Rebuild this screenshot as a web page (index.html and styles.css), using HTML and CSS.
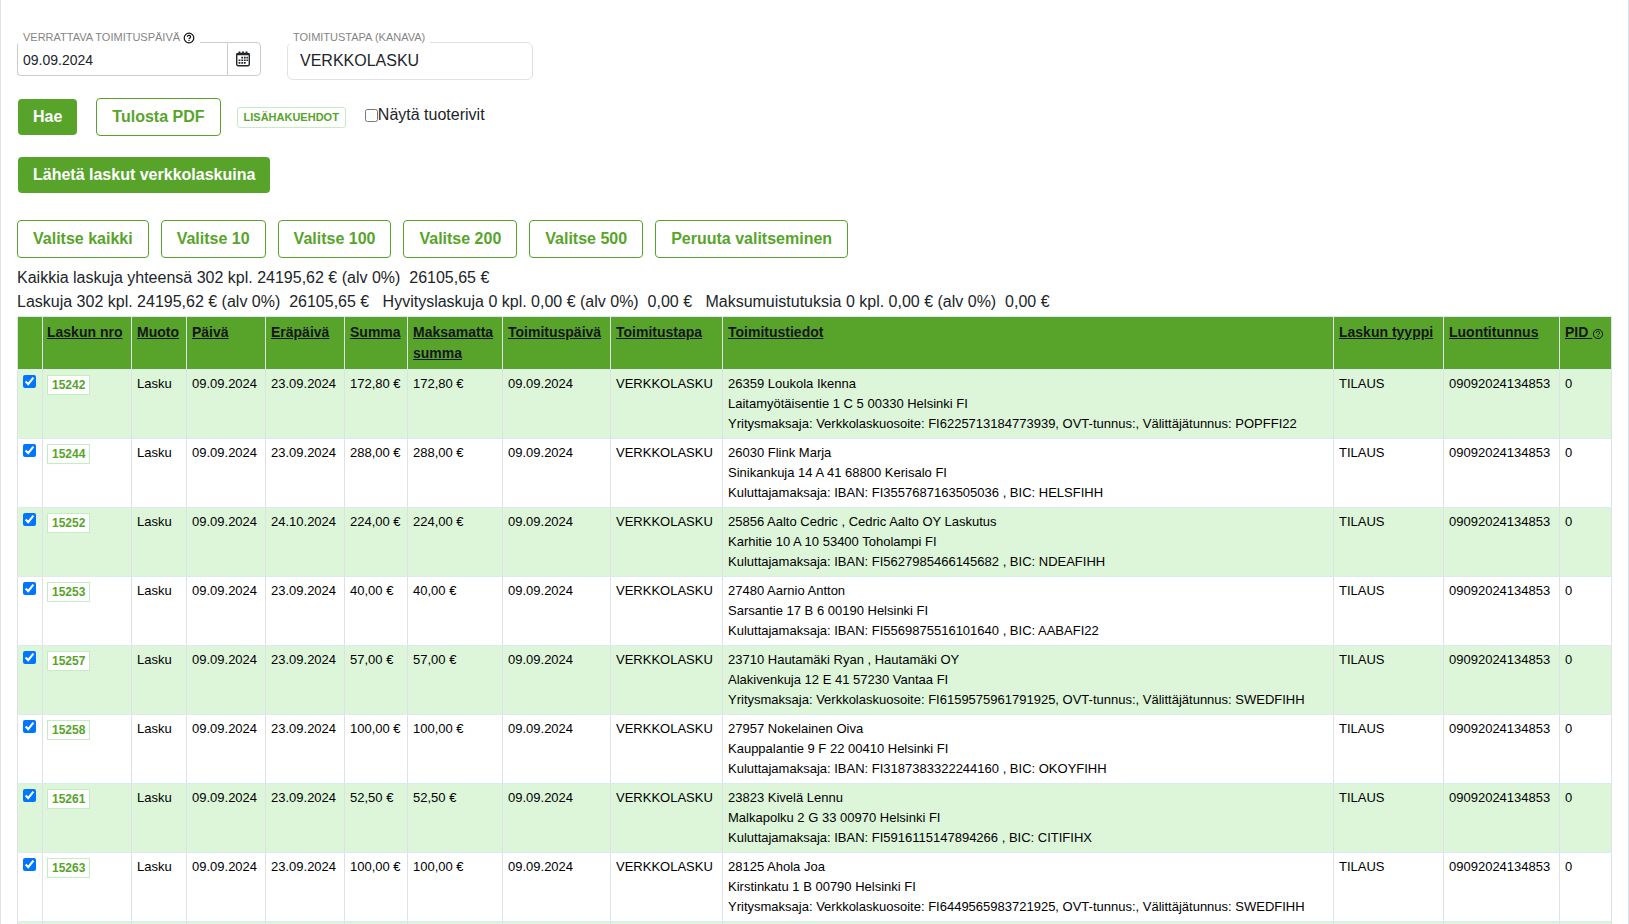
FILE: index.html
```
<!DOCTYPE html>
<html lang="fi">
<head>
<meta charset="utf-8">
<title>Verkkolaskut</title>
<link rel="stylesheet" href="styles.css">
</head>
<body>
<main class="page">
  <form class="filters">
    <div class="fields">
      <div class="field field-date">
        <label class="field-label" for="date">VERRATTAVA TOIMITUSPÄIVÄ
          <svg class="help" viewBox="0 0 12 12" aria-hidden="true"><circle cx="6" cy="6" r="4.8"/><path d="M4.4 4.9a1.6 1.5 0 1 1 2.4 1.2c-.6.4-.8.6-.8 1.1M6 8.1v1"/></svg>
        </label>
        <input class="date-input" id="date" type="text" value="09.09.2024">
        <button class="date-button" type="button" aria-label="Avaa kalenteri">
          <svg class="calendar" viewBox="0 0 14 16" aria-hidden="true">
            <rect class="cal-frame" x=".7" y="2.5" width="12.6" height="12.3" rx="1.5"/>
            <path class="cal-head" d="M.7 2h12.6v2.2H.7zM2.6.6h1.8V3H2.6zM6.1.6h1.8V3H6.1zM9.6.6h1.8V3H9.6z"/>
            <path class="cal-dots" d="M5.3 5.7h1.8v1.7H5.3zM7.9 5.7h1.8v1.7H7.9zM10.4 5.7h1.5v1.7h-1.5zM2.6 8.4h1.8v1.7H2.6zM5.3 8.4h1.8v1.7H5.3zM7.9 8.4h1.8v1.7H7.9zM10.4 8.4h1.5v1.7h-1.5zM2.6 11.1h1.8v1.7H2.6zM5.3 11.1h1.8v1.7H5.3zM7.9 11.1h1.8v1.7H7.9z"/>
          </svg>
        </button>
      </div>
      <div class="field field-channel">
        <label class="field-label" for="channel">TOIMITUSTAPA (KANAVA)</label>
        <select class="channel-select" id="channel"><option>VERKKOLASKU</option></select>
      </div>
    </div>
    <div class="actions">
      <button class="btn btn-solid" type="button">Hae</button>
      <button class="btn btn-outline" type="button">Tulosta PDF</button>
      <button class="btn-small" type="button">LISÄHAKUEHDOT</button>
      <label class="check-label"><input class="check" type="checkbox">Näytä tuoterivit</label>
    </div>
    <div class="send"><button class="btn btn-solid" type="button">Lähetä laskut verkkolaskuina</button></div>
    <div class="selectors">
      <button class="btn btn-outline" type="button">Valitse kaikki</button>
      <button class="btn btn-outline" type="button">Valitse 10</button>
      <button class="btn btn-outline" type="button">Valitse 100</button>
      <button class="btn btn-outline" type="button">Valitse 200</button>
      <button class="btn btn-outline" type="button">Valitse 500</button>
      <button class="btn btn-outline" type="button">Peruuta valitseminen</button>
    </div>
  </form>
  <p class="summary">Kaikkia laskuja yhteensä 302 kpl. 24195,62 € (alv 0%)&nbsp; 26105,65 €</p>
  <p class="summary">Laskuja 302 kpl. 24195,62 € (alv 0%)&nbsp; 26105,65 € &nbsp; Hyvityslaskuja 0 kpl. 0,00 € (alv 0%)&nbsp; 0,00 € &nbsp; Maksumuistutuksia 0 kpl. 0,00 € (alv 0%)&nbsp; 0,00 €</p>
  <table class="invoices">
    <colgroup>
      <col class="c-check"><col class="c-number"><col class="c-format"><col class="c-date"><col class="c-date"><col class="c-sum"><col class="c-unpaid"><col class="c-delivery"><col class="c-method"><col><col class="c-type"><col class="c-batch"><col class="c-pid">
    </colgroup>
    <thead>
      <tr>
        <th></th>
        <th><a href="#">Laskun nro</a></th>
        <th><a href="#">Muoto</a></th>
        <th><a href="#">Päivä</a></th>
        <th><a href="#">Eräpäivä</a></th>
        <th><a href="#">Summa</a></th>
        <th><a href="#">Maksamatta summa</a></th>
        <th><a href="#">Toimituspäivä</a></th>
        <th><a href="#">Toimitustapa</a></th>
        <th><a href="#">Toimitustiedot</a></th>
        <th><a href="#">Laskun tyyppi</a></th>
        <th><a href="#">Luontitunnus</a></th>
        <th class="nowrap"><a href="#">PID <svg class="help" viewBox="0 0 12 12" aria-hidden="true"><circle cx="6" cy="6" r="4.6"/><path d="M4.4 4.9a1.6 1.5 0 1 1 2.4 1.2c-.6.4-.8.6-.8 1.1M6 8.1v1"/></svg></a></th>
      </tr>
    </thead>
    <tbody id="rows"></tbody>
  </table>
</main>
<script src="rows.js"></script>
</body>
</html>
```
FILE: styles.css
```
* { box-sizing: border-box; }

body {
  margin: 0;
  overflow: hidden;
  background: #fff;
  color: #212529;
  font: 16px/24px Arial, "Liberation Sans", sans-serif;
}

button, input, select { font-family: inherit; }

.page {
  min-height: 100vh;
  padding: 42px 16px 0;
  border: solid #dee2e6;
  border-width: 0 1px;
}

.fields { display: flex; align-items: flex-start; gap: 26px; }
.field { position: relative; display: flex; }
.field-date { width: 244px; height: 34px; }
.field-channel { width: 246px; height: 38px; }

.field-label {
  position: absolute;
  top: -12px;
  left: 1px;
  padding: 0 5px;
  background: #fff;
  color: #858585;
  font-size: 11px;
  line-height: 14px;
  white-space: nowrap;
}

.help {
  width: 12px;
  height: 12px;
  fill: none;
  stroke: #111;
  stroke-width: 1.2;
  vertical-align: -3px;
}

.date-input {
  flex: 1;
  min-width: 0;
  padding: 2px 5px 0;
  border: 1px solid #ccc;
  border-right: 0;
  border-radius: 4px 0 0 4px;
  color: #212529;
  font-size: 14px;
}

.date-button {
  display: flex;
  align-items: center;
  justify-content: center;
  width: 34px;
  padding: 0 2px 0 0;
  border: 1px solid #ccc;
  border-radius: 0 4px 4px 0;
  background: #fff;
}

.calendar { width: 14px; height: 16px; }
.cal-frame { fill: none; stroke: #212529; stroke-width: 1.4; }
.cal-head, .cal-dots { fill: #212529; }

.channel-select {
  width: 100%;
  padding: 0 12px 2px;
  border: 1px solid #dee2e6;
  border-radius: 6px;
  background: #fff;
  color: #212529;
  font-size: 16px;
  appearance: none;
}

.btn {
  height: 36px;
  padding: 0 15px 1px;
  border: 0;
  border-radius: 4px;
  font-size: 16px;
  font-weight: 700;
}
.btn-solid { margin-left: 1px; background: #58a42b; color: #fff; }
.btn-outline { height: 38px; border: 1px solid #58a42b; background: #fff; color: #58a42b; }

.actions { display: flex; align-items: center; margin-top: 18px; }
.actions .btn-outline { margin-left: 19px; }

.btn-small {
  height: 21px;
  margin-left: 16px;
  padding: 0 6px;
  border: 1px solid #c3edc3;
  border-radius: 3px;
  background: #fff;
  color: #58a42b;
  font-size: 11px;
  font-weight: 700;
}

.check-label { display: flex; align-items: center; margin: 0 0 4px 19px; }
.check { width: 13px; height: 13px; margin: 0; }

.send { display: flex; margin-top: 21px; }
.selectors { display: flex; gap: 12px; margin: 27px 0 8px; }

.summary { margin: 0; }

.invoices {
  width: 100%;
  margin-top: 2px;
  border-collapse: collapse;
  table-layout: fixed;
  color: #000;
  font-size: 13px;
  line-height: 20px;
}

.invoices th, .invoices td {
  padding: 4px 5px;
  border: 1px solid #dee2e6;
  border-block-color: #dcebf2;
  text-align: left;
  vertical-align: top;
}

.invoices th { padding: 5px; background: #58a42b; font-size: 14px; line-height: 21px; }
.invoices th a { color: #16161d; }
.invoices th .help { stroke-width: 1; }
.invoices th:nth-child(2), .invoices td:nth-child(2) { padding-left: 4px; }
.nowrap { white-space: nowrap; }
.invoices tbody tr:nth-child(odd) { background: #ddf6da; }
.invoices .check { display: block; margin-top: 1px; }

.c-check { width: 25px; }
.c-number { width: 89px; }
.c-format { width: 55px; }
.c-date { width: 79px; }
.c-sum { width: 63px; }
.c-unpaid { width: 95px; }
.c-delivery { width: 108px; }
.c-method { width: 112px; }
.c-type { width: 110px; }
.c-batch { width: 116px; }
.c-pid { width: 52px; }

.invoice-link {
  display: block;
  width: max-content;
  margin-top: 1px;
  padding: 0 4px;
  border: 1px solid #c3edc3;
  background: #fff;
  color: #58a42b;
  font-size: 12px;
  font-weight: 700;
  line-height: 18px;
  text-decoration: none;
}
```
FILE: rows.js
```
const invoices = [
  ["15242", "23.09.2024", "172,80 €", "26359 Loukola Ikenna", "Laitamyötäisentie 1 C 5 00330 Helsinki FI", "Yritysmaksaja: Verkkolaskuosoite: FI6225713184773939, OVT-tunnus:, Välittäjätunnus: POPFFI22"],
  ["15244", "23.09.2024", "288,00 €", "26030 Flink Marja", "Sinikankuja 14 A 41 68800 Kerisalo FI", "Kuluttajamaksaja: IBAN: FI3557687163505036 , BIC: HELSFIHH"],
  ["15252", "24.10.2024", "224,00 €", "25856 Aalto Cedric , Cedric Aalto OY Laskutus", "Karhitie 10 A 10 53400 Toholampi FI", "Kuluttajamaksaja: IBAN: FI5627985466145682 , BIC: NDEAFIHH"],
  ["15253", "23.09.2024", "40,00 €", "27480 Aarnio Antton", "Sarsantie 17 B 6 00190 Helsinki FI", "Kuluttajamaksaja: IBAN: FI5569875516101640 , BIC: AABAFI22"],
  ["15257", "23.09.2024", "57,00 €", "23710 Hautamäki Ryan , Hautamäki OY", "Alakivenkuja 12 E 41 57230 Vantaa FI", "Yritysmaksaja: Verkkolaskuosoite: FI6159575961791925, OVT-tunnus:, Välittäjätunnus: SWEDFIHH"],
  ["15258", "23.09.2024", "100,00 €", "27957 Nokelainen Oiva", "Kauppalantie 9 F 22 00410 Helsinki FI", "Kuluttajamaksaja: IBAN: FI3187383322244160 , BIC: OKOYFIHH"],
  ["15261", "23.09.2024", "52,50 €", "23823 Kivelä Lennu", "Malkapolku 2 G 33 00970 Helsinki FI", "Kuluttajamaksaja: IBAN: FI5916115147894266 , BIC: CITIFIHX"],
  ["15263", "23.09.2024", "100,00 €", "28125 Ahola Joa", "Kirstinkatu 1 B 00790 Helsinki FI", "Yritysmaksaja: Verkkolaskuosoite: FI6449565983721925, OVT-tunnus:, Välittäjätunnus: SWEDFIHH"],
];

const rowHtml = ([number, due, sum, name, address, payer]) => `<tr>
  <td><input class="check" type="checkbox" checked aria-label="Valitse lasku ${number}"></td>
  <td><a class="invoice-link" href="#">${number}</a></td>
  <td>Lasku</td><td>09.09.2024</td><td>${due}</td><td>${sum}</td><td>${sum}</td>
  <td>09.09.2024</td><td>VERKKOLASKU</td>
  <td>${name}<br>${address}<br>${payer}</td>
  <td>TILAUS</td><td>09092024134853</td><td>0</td>
</tr>`;

const fillerRow = `<tr>${"<td></td>".repeat(13)}</tr>`;

document.getElementById("rows").innerHTML = invoices.map(rowHtml).join("") + fillerRow;
```
